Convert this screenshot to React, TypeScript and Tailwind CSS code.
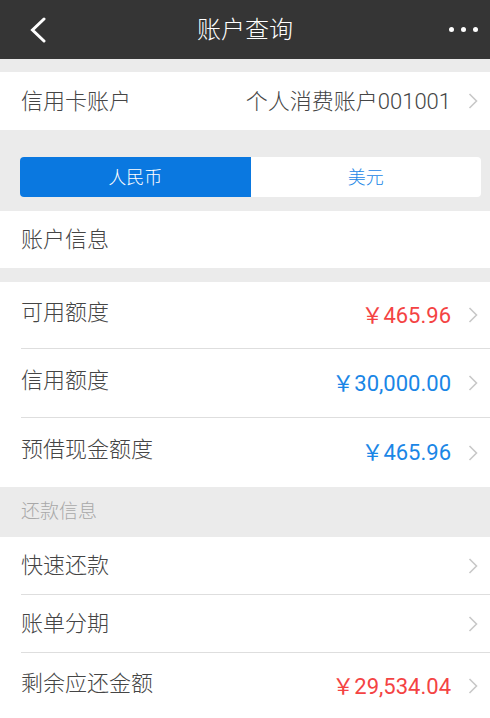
const cjk = "font-['Roboto','Noto_Sans_CJK_SC',sans-serif] font-light";

function Chevron() {
  return (
    <svg width="10" height="16" viewBox="0 0 10 16" className="shrink-0 ml-[17px] mr-[12px]">
      <path d="M1.5 1 L8.5 8 L1.5 15" fill="none" stroke="#c8c8c8" strokeWidth="1.6" />
    </svg>
  );
}

type RowProps = {
  label: string;
  value?: string;
  color?: string;
  h: string;
  divider?: boolean;
  lift?: boolean;
};

function Row({ label, value, color, h, divider, lift }: RowProps) {
  return (
    <div className={`bg-white pl-[21px] ${h}`}>
      <div className={`flex items-center h-full ${divider ? "border-b border-[#dedede]" : ""}`}>
        <span className={`flex-1 text-[22px] text-[#454545] ${lift ? "pb-[6px]" : ""}`}>{label}</span>
        {value && <span className={`text-[22px] font-normal ${color}`}>{value}</span>}
        <Chevron />
      </div>
    </div>
  );
}

export default function App() {
  return (
    <div className={`w-[490px] h-[718px] overflow-hidden bg-[#ebebeb] ${cjk}`}>
      {/* Header */}
      <div className="h-[59px] bg-[#353535] flex items-center justify-between px-[30px] pr-[12px] relative">
        <svg width="18" height="26" viewBox="0 0 18 26" className="-ml-[1px]">
          <path d="M15 2 L3.5 13 L15 24" fill="none" stroke="#fff" strokeWidth="3" strokeLinecap="round" />
        </svg>
        <h1 className="absolute left-0 right-0 text-center text-white text-[24px] leading-none pointer-events-none">账户查询</h1>
        <div className="flex gap-[7px]">
          <span className="w-[5px] h-[5px] rounded-full bg-white" />
          <span className="w-[5px] h-[5px] rounded-full bg-white" />
          <span className="w-[5px] h-[5px] rounded-full bg-white" />
        </div>
      </div>

      <div className="h-[13px]" />
      <div className="bg-white h-[58px] pl-[21px] flex items-center">
        <span className="flex-1 text-[22px] text-[#454545]">信用卡账户</span>
        <span className="text-[22px] text-[#454545]">个人消费账户001001</span>
        <Chevron />
      </div>

      {/* Currency segment */}
      <div className="pl-[20px] pr-[9px] pt-[27px] pb-[14px]">
        <div className="flex h-[40px] rounded-[4px] overflow-hidden bg-white">
          <div className="flex-1 bg-[#0a78e0] text-white text-[18px] flex items-center justify-center">人民币</div>
          <div className="flex-1 text-[#1a86e6] text-[18px] flex items-center justify-center">美元</div>
        </div>
      </div>

      <div className="bg-white h-[57px] pl-[21px] flex items-center">
        <span className="text-[22px] text-[#454545]">账户信息</span>
      </div>
      <div className="h-[14px]" />

      <Row label="可用额度" value="￥465.96" color="text-[#f44343]" h="h-[67px]" divider lift />
      <Row label="信用额度" value="￥30,000.00" color="text-[#1a86e6]" h="h-[69px]" divider lift />
      <Row label="预借现金额度" value="￥465.96" color="text-[#1a86e6]" h="h-[69px]" lift />

      <div className="h-[50px] pl-[21px] flex items-center">
        <span className="text-[19px] text-[#a8a8a8]">还款信息</span>
      </div>

      <Row label="快速还款" h="h-[58px]" divider />
      <Row label="账单分期" h="h-[58px]" divider />
      <Row label="剩余应还金额" value="￥29,534.04" color="text-[#f44343]" h="h-[66px]" lift />
    </div>
  );
}
